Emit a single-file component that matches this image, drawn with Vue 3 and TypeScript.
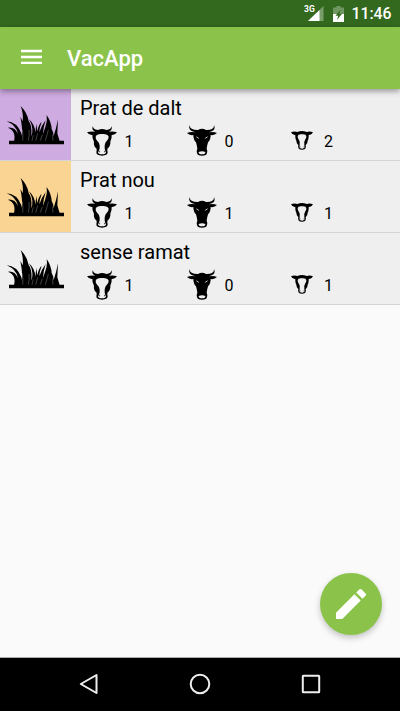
<script setup lang="ts">
interface Herd {
  name: string
  tone: string
  cows: number
  bulls: number
  calves: number
}

const herds: Herd[] = [
  { name: 'Prat de dalt', tone: 'lilac', cows: 1, bulls: 0, calves: 2 },
  { name: 'Prat nou', tone: 'amber', cows: 1, bulls: 1, calves: 1 },
  { name: 'sense ramat', tone: 'plain', cows: 1, bulls: 0, calves: 1 },
]
</script>

<template>
  <div class="screen">
    <header class="status">
      <svg class="signal" width="20" height="18" viewBox="0 0 20 18">
        <path d="M19.500 3v15H4z" fill="#fff" fill-opacity=".35" />
        <path d="M15.500 7v11H4z" fill="#fff" />
        <text x="0" y="9" class="net">3G</text>
      </svg>
      <svg class="battery" width="11" height="16" viewBox="0 0 11 16">
        <path d="M3.500 0h4v1.600H11V8H0V1.600h3.500z" fill="#fff" fill-opacity=".3" />
        <path d="M0 8h11v8H0z" fill="#fff" />
        <path d="M7.500 3.500 2.500 9.800h2.700L4 14l5-6.200H6.200z" fill="#33691e" />
      </svg>
      <span class="clock">11:46</span>
    </header>
    <div class="toolbar">
      <svg class="menu" width="21" height="16" viewBox="0 0 21 16">
        <path d="M0 .8h21v2.400H0zM0 6.800h21v2.400H0zM0 12.700h21v2.400H0z" fill="#fff" />
      </svg>
      <h1>VacApp</h1>
    </div>
    <main>
      <section v-for="herd in herds" :key="herd.name" class="herd">
        <div class="field" :class="herd.tone">
          <svg width="56" height="39" viewBox="27 52 168 117">
            <path d="M27 156H192V167H27z" />
            <path d="M42 158C47 138 41 123 24 117Q44 114 54 136Q49 110 20 98Q51 100 64 134L66 142Q68 118 61 84L68 98Q71 76 62 52Q83 74 86 97Q97 112 94 143Q98 134 97 120Q95 104 87 92Q105 108 106 132L109 106L112 128Q115 109 125 99Q118 118 118 131Q125 110 137 94Q130 115 129 136L136 115Q143 98 140 79Q154 100 155 121Q160 128 161 142Q169 118 174 92Q173 114 172 134L179 158z" />
            <path d="M67 122Q70 142 68 156M87 124Q89 140 85 156M100 140l-4 16M113 134l-6 22M127 138l-6 18M145 124l-9 32M158 138l1 18" fill="none" stroke="#fff" stroke-opacity=".5" stroke-width="1.500" />
          </svg>
        </div>
        <div class="details">
          <h2>{{ herd.name }}</h2>
          <div class="counts">
            <div class="count">
              <svg width="30" height="31" viewBox="21 17 90 93">
                <path d="M39 20Q38 31 54 32Q66 26 79 32Q95 31 94 20Q99 31 87 37Q101 35 111 39Q105 48 95 47Q96 58 91 67Q92 80 83 87Q80 94 83 99Q83 109 66 109Q49 109 49 99Q52 94 49 87Q40 80 42 67Q36 58 37 47Q27 48 21 39Q32 35 45 37Q33 31 39 20z" />
                <path d="M66 44Q83 43 86 52Q86 60 80 65Q73 72 74 86Q74 93 78 98Q78 105 66 105Q54 105 54 98Q59 93 59 86Q60 72 52 65Q46 60 47 52Q50 43 66 44z" fill="#efefef" />
                <path d="M55 95l5 3M77 95l-5 3" fill="none" stroke="#000" stroke-width="2.500" />
              </svg>
              <span>{{ herd.cows }}</span>
            </div>
            <div class="count">
              <svg width="30" height="31" viewBox="21 17 90 93">
                <path d="M29 17Q29 29 43 31L54 32Q66 24 78 32L90 31Q103 28 102 17Q108 30 95 36L87 39Q100 36 111 41Q103 49 92 47Q92 62 84 69Q81 80 80 88Q83 94 81 101Q80 109 66 109Q52 109 51 101Q49 94 52 88Q51 80 48 69Q40 62 40 47Q28 49 21 41Q32 36 45 39L37 36Q24 30 29 17z" />
                <path d="m48 51 10 6q-8 1-10-6M84 51l-10 6q8 1 10-6M56 98q10-4 20 0 1 7-10 7t-10-7" fill="#efefef" />
              </svg>
              <span>{{ herd.bulls }}</span>
            </div>
            <div class="count calf">
              <svg width="22" height="19" viewBox="19 34 66 57">
                <path d="M38 37Q52 31 66 37Q75 34 85 38Q81 47 72 46Q73 56 69 63Q69 72 63 77Q66 89 52 90Q38 89 41 77Q35 72 35 63Q31 56 32 46Q23 47 19 38Q29 34 38 37z" />
                <path d="M52 44Q64 42 65 50Q65 57 61 61Q57 67 59 76Q63 86 52 87Q41 86 45 76Q47 67 43 61Q39 57 39 50Q40 42 52 44z" fill="#efefef" />
                <path d="m44 79 3 2M60 79l-3 2" stroke="#000" stroke-width="2.500" />
              </svg>
              <span>{{ herd.calves }}</span>
            </div>
          </div>
        </div>
      </section>
    </main>
    <button class="edit" aria-label="Edit">
      <svg width="30" height="30" viewBox="3 3 18 18">
        <path d="M3 17.250V21h3.750L17.810 9.940l-3.750-3.750zM20.710 7.040a1 1 0 0 0 0-1.410l-2.340-2.340a1 1 0 0 0-1.410 0l-1.830 1.830 3.750 3.750z" fill="#fff" />
      </svg>
    </button>
    <nav class="navbar">
      <svg width="20" height="22" viewBox="0 0 20 22"><path d="M17.500 2v18L1.800 11z" /></svg>
      <svg width="22" height="22" viewBox="0 0 22 22"><circle cx="11" cy="11" r="9.300" /></svg>
      <svg width="20" height="20" viewBox="0 0 20 20"><rect x="1.800" y="1.800" width="16.400" height="16.400" rx=".5" /></svg>
    </nav>
  </div>
</template>

<style>
body {
  margin: 0;
}
</style>

<style scoped>
.screen {
  position: relative;
  display: flex;
  flex-direction: column;
  width: 400px;
  height: 711px;
  overflow: hidden;
  background: #fafafa;
  color: #000;
  font-family: Roboto, sans-serif;
}
.status {
  display: flex;
  box-sizing: border-box;
  height: 27px;
  padding-left: 304px;
  background: #33691e;
}
.signal {
  margin-top: 3px;
}
.net {
  fill: #fff;
  font-size: 8.5px;
  font-weight: 700;
}
.battery {
  margin: 5.5px 0 0 9px;
}
.clock {
  margin: 4px 0 0 7.5px;
  color: #fff;
  font-size: 15.8px;
  font-weight: 500;
  line-height: 20px;
}
.toolbar {
  position: relative;
  z-index: 1;
  display: flex;
  align-items: center;
  box-sizing: border-box;
  height: 62px;
  padding-left: 21px;
  background: #8bc34a;
  box-shadow: 0 2px 6px rgba(0, 0, 0, 0.4);
}
.menu {
  margin-bottom: 2px;
}
h1 {
  margin: 2px 0 0 25px;
  color: #fff;
  font-size: 22px;
  font-weight: 500;
  line-height: 28px;
}
main {
  flex: 1;
}
.herd {
  display: flex;
  box-sizing: border-box;
  height: 72px;
  border-bottom: 1px solid #d5d5d5;
  background: #efefef;
}
.field {
  box-sizing: border-box;
  width: 71px;
  padding: 16.5px 0 0 9px;
}
.field svg {
  display: block;
  overflow: visible;
}
.lilac {
  background: #ceabe0;
}
.amber {
  background: #f9d492;
}
.details {
  flex: 1;
  padding-left: 9px;
}
h2 {
  margin: 6px 0 0;
  font-size: 20px;
  font-weight: 400;
  line-height: 26px;
}
.counts {
  display: grid;
  grid-template-columns: repeat(3, 100px);
  padding-left: 7px;
}
.count {
  display: flex;
  align-items: center;
  gap: 7.5px;
  height: 38px;
  font-size: 16px;
}
.count svg {
  flex: none;
}
.count span {
  padding-top: 2px;
}
.calf {
  padding-left: 4px;
  gap: 11px;
}
.edit {
  position: absolute;
  top: 573px;
  left: 320px;
  display: grid;
  place-items: center;
  width: 62px;
  height: 62px;
  padding: 0;
  border: 0;
  border-radius: 50%;
  background: #8bc34a;
  box-shadow: 0 3px 6px rgba(0, 0, 0, 0.22);
}
.navbar {
  display: flex;
  align-items: center;
  justify-content: space-between;
  box-sizing: border-box;
  height: 54px;
  padding: 0 79px 1px;
  border-top: 1px solid #aaa;
  background: #000;
}
.navbar svg {
  fill: none;
  stroke: #eee;
  stroke-width: 2;
  stroke-linejoin: round;
}
</style>
